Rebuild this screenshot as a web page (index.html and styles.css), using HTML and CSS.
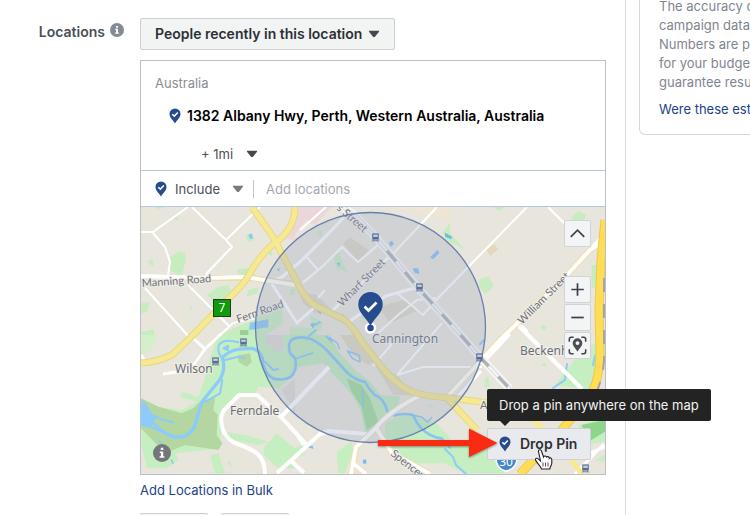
FILE: index.html
```html
<!DOCTYPE html>
<html lang="en">
<head>
<meta charset="utf-8">
<title>Locations</title>
<link rel="stylesheet" href="styles.css">
</head>
<body>
<svg class="defs" aria-hidden="true">
  <symbol id="pin" viewBox="0 0 12 16"><path d="M6 .5A5.5 5.5 0 0 0 .5 6C.5 9.400 3.500 11.500 6 15.500 8.500 11.500 11.500 9.400 11.500 6A5.500 5.500 0 0 0 6 .5Z" fill="#264b8e"/><path d="M3.300 6.200 5.300 8.100 8.800 4.500" fill="none" stroke="#fff" stroke-width="1.500"/></symbol>
  <symbol id="caret" viewBox="0 0 12 8"><path d="M.8.8H11.200L10.800 2 7 6.800Q6 7.700 5 6.800L1.200 2Z"/></symbol>
  <symbol id="info" viewBox="0 0 18 18"><circle cx="9" cy="9" r="9"/><path d="M7.800 3.800H10.300V6H7.800ZM6.800 7.400H10.200V12.200H11.400V13.800H6.600V12.200H7.900V8.900H6.800Z" fill="#fff"/></symbol>
  <symbol id="train" viewBox="0 0 20 22"><path d="M2 1H18V16H2Z" fill="#5a6d92"/><path d="M4.500 4H15.500V9.500H4.500Z" fill="#c9d0de"/><path d="M5 16 2 21M15 16 18 21M4 19H16" stroke="#5a6d92" stroke-width="2"/></symbol>
</svg>

<div class="page">
  <main class="form">
    <div class="form-label">
      <span id="loc-label">Locations</span>
      <svg class="info"><use href="#info"/></svg>
    </div>
    <div class="form-field">
      <div class="picker picker-main">
        <select aria-labelledby="loc-label"><option>People recently in this location</option></select>
        <svg class="caret"><use href="#caret"/></svg>
      </div>

      <section class="locations">
        <div class="chosen">
          <div class="country">Australia</div>
          <div class="address"><svg class="pin"><use href="#pin"/></svg><strong>1382 Albany Hwy, Perth, Western Australia, Australia</strong></div>
          <div class="picker radius">
            <select aria-label="Radius"><option>+ 1mi</option></select>
            <svg class="caret"><use href="#caret"/></svg>
          </div>
        </div>
        <div class="search">
          <svg class="pin"><use href="#pin"/></svg>
          <div class="picker include">
            <select aria-label="Include or exclude"><option>Include</option></select>
            <svg class="caret"><use href="#caret"/></svg>
          </div>
          <input type="text" placeholder="Add locations" aria-label="Add locations">
        </div>

        <div class="map">
          <svg class="map-art" viewBox="141 207 464 267" role="img" aria-label="Map of Cannington">
            <rect x="141" y="207" width="464" height="267" fill="#e8e5dc"/>
            <!-- parks and suburbs -->
            <g transform="translate(135 200) scale(.33333)" fill="#c7ecc0">
              <path d="M106 170 130 155 150 158 152 180 140 232 105 210ZM20 305 45 310 35 335 18 340ZM20 395 55 388 60 420H18ZM40 180 52 178 56 200 40 190ZM60 20H90L70 28ZM110 55 130 50 128 62ZM330 108 345 100 360 120 340 125ZM305 208 350 205 370 240 310 222ZM395 160 412 152 410 168ZM215 285 250 262 280 255 292 280 270 300 235 302ZM340 270 372 262 368 280 335 290ZM160 325 170 318 170 330ZM230 420 250 405 320 375 355 362 400 330 440 325 445 370 400 400 385 420Z"/>
              <path d="M445 95 480 70V120L450 118Z" fill="#eed8d8"/>
              <path d="M315 415V390H340V415Z" fill="#9ccf95"/>
              <path d="M340 105 350 100 355 115 345 117ZM345 368 400 358V382L342 390ZM425 208 436 204 432 215Z" fill="#8cc8f5"/>
            </g>
            <g transform="translate(290 200) scale(.33333)" fill="#c7ecc0">
              <path d="M0 30 25 20H125L75 75 50 60 10 110 0 120Z" fill="#ecd7d8"/>
              <path d="M170 20H480V60L360 30 250 18Z" fill="#eee5d2"/>
              <path d="M160 130 180 112 235 150 205 188Z M265 320 340 300 385 330 300 370ZM25 275 80 285 120 325 75 340 40 310Z" fill="#ddd7c4"/>
              <path d="M145 150 158 190 172 215 140 205 132 180ZM80 95 95 90 96 108 83 105ZM455 100 480 70V115ZM0 270 15 265V282L0 285ZM0 380 70 385 90 420H0ZM60 345 100 370 90 395 65 375ZM150 340H164L160 350ZM210 350 225 345 230 360Z"/>
              <path d="M420 172 443 150 448 158 430 178ZM368 205 385 205 388 222 374 218ZM296 128 306 122 312 132 302 140ZM140 190 150 187 148 200ZM82 333 94 330 92 345ZM60 372 75 368 70 388Z" fill="#84c2f8"/>
            </g>
            <g transform="translate(445 200) scale(.33333)" fill="#c7ecc0">
              <path d="M0 85 60 148 0 120ZM103 240 130 228 147 258 122 282 103 262ZM145 20H180L160 34ZM380 50 400 34 424 46 410 70 385 60ZM288 375 304 378 300 392 288 385ZM440 195 457 195 450 265 440 260Z"/>
              <path d="M125 150 148 133 160 148 135 168Z" fill="#e4d8b8"/>
              <path d="M0 98 22 110 18 118 0 110Z" fill="#70bde0"/>
            </g>
            <g transform="translate(135 335) scale(.33333)">
              <path d="M18 0H65L60 30 18 70Z" fill="#d5efcb"/>
              <path d="M250 0H480V120L430 160 370 155 360 180 310 175 262 235 255 340 120 355 130 375 95 400 35 400 20 330V190L70 215 140 225 185 200 135 185 140 170 190 185 210 130 225 70ZM265 290 330 300 400 320 370 330 265 310ZM385 340 425 295 480 340V400L430 400 385 360ZM225 360 250 355 270 415H240ZM275 380 285 378 295 400Z" fill="#c5efc0"/>
              <path d="M18 190 70 215 140 235 175 220 200 195 240 190 235 225 248 240 245 300 262 325 250 345 150 330 90 355 18 280ZM310 60 345 55 350 80 335 95 310 80Z" fill="#b4d6a0"/>
              <path d="M395 0H445V45L430 55 390 20ZM440 165 480 130V230Z" fill="#dedad4"/>
            </g>
            <g transform="translate(290 335) scale(.33333)">
              <path d="M0 0H120L145 50 200 110 240 140 270 180 330 185 325 205 300 245 245 290 225 290 210 220 180 170 140 130 100 85 30 95 0 130Z" fill="#c0eabc"/>
              <path d="M170 130 215 150 240 190 265 260 230 285 215 215 185 170Z" fill="#9edb9a"/>
              <path d="M285 265 320 245 360 235 440 265 480 310V385L350 385 300 345 285 300ZM140 350 185 320 190 345 165 415H145ZM0 348 35 330 45 358 0 378ZM415 210 425 205 422 220Z" fill="#c5efc0"/>
              <path d="M150 0H195L255 80 235 90 190 60ZM255 90 320 120 370 180 310 180Z" fill="#ddd8c3"/>
              <path d="M218 375 228 373 230 385 220 387ZM50 335 68 332 70 342Z" fill="#78bdf1"/>
            </g>
            <g transform="translate(445 335) scale(.33333)">
              <path d="M330 150 400 60 480 0V90L440 165 400 160ZM0 318 100 325 135 355 180 415H60L0 385ZM400 270 480 250V320L410 330ZM450 375 480 360V380ZM285 90 300 82 305 96ZM120 130 130 125 135 155H118Z" fill="#c5efc0"/>
              <path d="M410 270 480 255V290L430 320Z" fill="#8dd58a"/>
            </g>
            <!-- rivers -->
            <g fill="none" stroke="#8ccbfa" stroke-linecap="round" stroke-linejoin="round">
              <g transform="translate(135 335) scale(.33333)">
                <path d="M25 200 50 240 85 255 115 262" stroke-width="6"/>
                <path d="M20 220Q40 250 60 270Q90 300 120 305T165 292C190 270 180 240 205 195L250 140Q275 105 262 68Q280 50 300 45T350 40Q375 45 382 70" stroke-width="10"/>
                <path d="M20 265 80 290 120 310M145 305 180 280 190 240M212 200 255 175 262 135M262 70Q245 50 252 30 265 10 310 22M270 75 310 65 330 68M390 80 415 105 430 102" stroke-width="6"/>
                <path d="M265 40 280 32 278 46ZM20 205 60 250 45 275 20 270ZM72 318 78 325M110 375 114 385" stroke-width="5" fill="#8ccbfa"/>
              </g>
              <g transform="translate(250 207) scale(.33333)" stroke="#84c5fa">
                <path d="M37 455Q40 500 70 515 100 522 122 510 142 490 136 455L120 438Q112 410 125 398 150 385 185 397 215 412 235 435L290 495Q315 520 345 525 355 545 375 565 405 575 415 625M432 625Q470 617 490 625 500 650 515 665 540 690 575 695" stroke-width="8"/>
                <path d="M138 455 188 438M338 550 340 600M492 625 515 630 532 645 545 632M228 388 245 405 238 392 262 408 268 425M292 432 328 445 330 465 308 455Z" stroke-width="4"/>
              </g>
              <path d="M442 438 450 448M445 449 453 457 456 465 466 474M553 388 565 380 567 364M593 365 595 356M480 344 484 340M309 336 316 330M315 325 320 322" stroke-width="2"/>
            </g>
            <!-- street casings and streets -->
            <g fill="none" stroke="#fff" stroke-linejoin="round">
              <path d="M188 207 153 232H141M153 233 165 247 170 262 168 275M192 207 226 240 232 247 207 273 205 281M226 240 260 207M145 288 191 339M188 285 229 326M215 340 233 323 255 318M305 255 318 270M318 270 303 282M318 298 325 290M326 207 300 230" stroke-width="2"/>
              <path d="M272 281 282 277 301 261 330 232 347 214M272 284 297 323 316 306M250 368" stroke-width="3"/>
              <path d="M207 278 250 278 294 284" stroke="#ecdca2" stroke-width="6"/>
              <path d="M141 276 205 278 245 277 295 285" stroke-width="4"/>
              <path d="M194 339 205 349 221 334M205 349 190 370 163 374M141 355 146 362" stroke-width="3"/>
              <path d="M265 474C265 455 255 450 235 443 219 435 219 415 225 409L239 395H257L281 417 296 433 304 445M281 417 329 367M277 473 296 456 320 434 329 431 367 434M290 427 306 444M290 460 304 473" stroke-width="4"/>
              <path d="M351 474 356 447 376 428Q388 412 419 396M376 428 392 453 430 474M354 464 366 474" stroke="#f1dfb5" stroke-width="6"/>
              <path d="M351 474 356 447 376 428Q388 412 419 396M376 428 392 453 430 474M354 464 366 474" stroke-width="4"/>
              <path d="M303 283 323 266 342 247 358 262 378 245M397 293 423 315 440 296 527 207M397 375 423 367H482M397 375 442 323M450 398 485 358M373 366 391 345 387 338M376 335 398 315 417 300 436 298M391 256 437 207M548 207 566 225" stroke-width="2"/>
              <path d="M333 310 390 256M350 321 386 296 418 287" stroke-width="3"/>
              <path d="M605 240 590 250 565 277 500 340 448 396" stroke="#f0dda8" stroke-width="6"/>
              <path d="M605 240 590 250 565 277 500 340 448 396M519 326 582 389M521 326 527 332M590 250 604 235" stroke-width="4"/>
              <path d="M604 444 575 474M485 361 510 334M451 404 481 371M590 453 605 447" stroke-width="3"/>
            </g>
            <!-- railway -->
            <g fill="none">
              <path d="M343 207 357 217 378 240 420 290 450 323 480 357 510 389" stroke="#f6f6f6" stroke-width="8"/>
              <path d="M343 207 357 217 378 240 420 290 450 323 480 357 510 389" stroke="#c4c6cb" stroke-width="4"/>
              <path d="M343 207 357 217 378 240 420 290 450 323 480 357 510 389" stroke="#f3f3f3" stroke-width="3"/>
              <path d="M378 240 420 290 450 323 480 357 510 389" stroke="#aeb0b3" stroke-width="3" stroke-dasharray="14 14" stroke-dashoffset="-14"/>
            </g>
            <!-- main roads -->
            <g fill="none" stroke-linejoin="round">
              <g stroke="#e7d789" stroke-width="7">
                <path d="M295 207C295 226 284 237 271 246 252 263 251 276 239 288L190 338 172 355Q158 362 141 363"/>
                <path d="M252 207 273 237 296 280Q304 299 316 306L345 320Q354 328 362 342L380 365Q395 384 412 392 430 397 450 398L488 403M447 398 477 430"/>
              </g>
              <g stroke="#f7e98f" stroke-width="5">
                <path d="M295 207C295 226 284 237 271 246 252 263 251 276 239 288L190 338 172 355Q158 362 141 363"/>
                <path d="M252 207 273 237 296 280Q304 299 316 306L345 320Q354 328 362 342L380 365Q395 384 412 392 430 397 450 398L488 403M447 398 477 430M568 456 582 474M528 416 542 428"/>
              </g>
              <path d="M605 220 601 260 599 310 600 350Q600 380 590 396L560 432 520 474" stroke="#eac94d" stroke-width="9"/>
              <path d="M605 220 601 260 599 310 600 350Q600 380 590 396L560 432 520 474" stroke="#ffdd55" stroke-width="7"/>
              <path d="M604 278V340Q606 370 597 391" stroke="#a5a5a5" stroke-width="2" stroke-dasharray="14 12"/>
            </g>
            <g class="streets">
              <text x="142" y="287" transform="rotate(-4 142 287)">Manning Road</text>
              <text x="238" y="323" transform="rotate(-19 238 323)">Fern Road</text>
              <text x="342" y="307" transform="rotate(-45 342 307)">Wharf Street</text>
              <text x="336" y="209" transform="rotate(41 336 209)">s Street</text>
              <text x="522" y="325" transform="rotate(-45 522 325)">William Street</text>
              <text x="390" y="455" transform="rotate(38 390 455)">Spencer</text>
              <text x="480" y="409">A</text>
            </g>
            <g class="suburbs">
              <text x="175" y="373">Wilson</text>
              <text x="230" y="415">Ferndale</text>
              <text x="372" y="343">Cannington</text>
              <text x="520" y="355">Beckenham</text>
            </g>
            <!-- search radius -->
            <circle cx="370.500" cy="327.500" r="115" fill="#98a6c5" fill-opacity=".3" stroke="#6882ad" stroke-width="1.300"/>
            <g>
              <use href="#train" x="371" y="233" width="9" height="9"/><use href="#train" x="415" y="283" width="9" height="9"/>
              <use href="#train" x="475" y="353" width="9" height="9"/><use href="#train" x="239" y="338" width="9" height="9"/>
              <use href="#train" x="211" y="357" width="9" height="9"/><use href="#train" x="581" y="464" width="9" height="9"/>
            </g>
            <rect x="213.500" y="299.500" width="17" height="17" fill="#109b0c" stroke="#233b22"/>
            <text class="route" x="222" y="312">7</text>
            <path d="M496 455H517Q518 469 506 471 495 469 496 455Z" fill="#4488cc" stroke="#fff" stroke-width="1.500"/>
            <text class="route" x="506" y="466">30</text>
            <!-- dropped pin -->
            <circle cx="370.500" cy="328" r="4.500" fill="#264b8e" stroke="#fff" stroke-width="2.500"/>
            <path d="M370.500 292A12.200 12.200 0 0 0 358.300 304.500C358.300 313 366 317 370.500 326 375 317 382.700 313 382.700 304.500A12.200 12.200 0 0 0 370.500 292Z" fill="#264b8e"/>
            <path d="M364.500 306.500 368.500 310.500 376.500 302.500" fill="none" stroke="#fff" stroke-width="2.700"/>
            <svg x="153" y="444" width="18" height="18" fill="#747778"><use href="#info"/></svg>
          </svg>

          <div class="controls">
            <button type="button" class="collapse" aria-label="Collapse map"><svg viewBox="0 0 26 26"><path d="M6 16.500 13 9.500 20 16.500"/></svg></button>
            <button type="button" aria-label="Zoom in"><svg viewBox="0 0 26 26"><path d="M6.500 13H19.500M13 6.500V19.500"/></svg></button>
            <button type="button" aria-label="Zoom out"><svg viewBox="0 0 26 26"><path d="M6.500 13H19.500"/></svg></button>
            <button type="button" aria-label="Find location"><svg viewBox="0 0 26 26"><path d="M4.500 9V6.500Q4.500 4.500 6.500 4.500H9M17 4.500H19.500Q21.500 4.500 21.500 6.500V9M21.500 17V19.500Q21.500 21.500 19.500 21.500H17M9 21.500H6.500Q4.500 21.500 4.500 19.500V17" stroke-width="1.600"/><path fill-rule="evenodd" d="M13 5.500A5 5 0 0 0 8 10.500C8 14 11 16 13 19.500 15 16 18 14 18 10.500A5 5 0 0 0 13 5.500ZM13 8.500A2 2 0 1 1 13 12.500 2 2 0 0 1 13 8.500Z" fill="#4b4f52" stroke="none"/></svg></button>
          </div>

          <div class="drop">
            <div class="tooltip" role="tooltip" id="drop-tip">Drop a pin anywhere on the map</div>
            <button type="button" class="drop-button" aria-describedby="drop-tip"><svg class="pin"><use href="#pin"/></svg>Drop Pin</button>
          </div>

          <svg class="pointer" viewBox="141 207 464 267" aria-hidden="true">
            <g class="shadow"><path d="M378 440H469V428.500L497.500 443 469 457V446H378Z" fill="#f92b12"/></g>
            <path d="M538.500 451.500C538 449.500 541 449 541.500 451L543.500 457C544 455.500 546.500 455.500 546.500 457.500 547 456 549.300 456.300 549.300 458.300 550 457.300 551.800 458 551.800 460V463C551.800 465.500 550 466.500 549.800 469H541.500C541 466 537 463.500 535.500 460 535 458 537.500 457.500 539 459.500L540.500 461Z" fill="#fff" stroke="#222" stroke-width="1.100"/>
            <path d="M543 462.500V466.500M545.500 462.500V466.500M548 462.500V466.500" stroke="#222" stroke-width=".8"/>
          </svg>
        </div>
      </section>

      <a class="bulk" href="#">Add Locations in Bulk</a>
      <div class="more"><button type="button" aria-label="Save"></button><button type="button" aria-label="Cancel"></button></div>
    </div>
  </main>

  <aside class="side">
    <div class="card">
      <p>The accuracy of estimates<br>campaign data<br>Numbers are provided<br>for your budget<br>guarantee results</p>
      <a href="#">Were these estimates helpful?</a>
    </div>
  </aside>
</div>
</body>
</html>
```

FILE: styles.css
```css
* { box-sizing: border-box; }
html { height: 100%; overflow: hidden; }
body {
  margin: 0;
  background: #fff;
  color: #4b4f56;
  font: 13px/20px Inter, "Liberation Sans", sans-serif;
}
button, select, input { font: inherit; color: inherit; }
a { color: #1d4286; text-decoration: none; }
.defs { display: none; }

.page { display: grid; grid-template-columns: minmax(0, 1fr) 124px; height: 100vh; overflow: hidden; }
.form {
  display: grid;
  grid-template-columns: 124px minmax(0, 1fr);
  gap: 16px;
  padding: 18px 19px 0 0;
  border-right: 1px solid #dcdde0;
}
.form-label {
  display: flex;
  justify-content: flex-end;
  align-items: flex-start;
  gap: 5px;
  padding-top: 5px;
  font-size: 14px;
  font-weight: 600;
}
.info { width: 14px; height: 14px; fill: #858b95; }
.form-label span { line-height: 18px; }

.picker { display: inline-grid; align-items: center; }
.picker > * { grid-area: 1 / 1; }
.picker select {
  appearance: none;
  margin: 0;
  padding: 0 24px 0 0;
  border: 0;
  background: none;
}
.caret { justify-self: end; width: 12px; height: 8px; fill: #444950; pointer-events: none; }
.picker-main { display: grid; width: 255px; margin-bottom: 10px; }
.picker-main select {
  height: 32px;
  padding: 0 14px;
  border: 1px solid #ccd0d5;
  border-radius: 2px;
  background: #f2f3f3;
  color: #2c3036;
  font-size: 14px;
  font-weight: 600;
}
.picker-main .caret { margin-right: 15px; }

.locations { border: 1px solid #bcc0c6; }
.chosen { padding: 12px 14px 6px; }
.country { color: #8a8d91; }
.address { display: flex; align-items: center; gap: 6px; padding: 13px 0 18px 14px; color: #000; font-size: 14px; white-space: nowrap; }
.address strong { font-weight: 600; }
.pin { flex: none; width: 12px; height: 16px; }
.radius { margin-left: 46px; }
.search {
  display: flex;
  align-items: center;
  height: 37px;
  padding: 0 14px;
  border: solid #b4c7df;
  border-width: 1px 0;
}
.include { margin-left: 8px; }
.include .caret { fill: #777b82; }
.search input {
  flex: 1;
  min-width: 0;
  height: 18px;
  margin-left: 9px;
  padding: 0 0 0 12px;
  border: 0;
  border-left: 1px solid #bfc5ce;
  background: none;
}
.search input::placeholder { color: #a5a8ad; opacity: 1; }

.map { position: relative; }
.map-art { display: block; width: 100%; height: auto; }
.map-art text { font-family: "Noto Sans", sans-serif; font-size: 12px; paint-order: stroke; stroke: #f0eee8; stroke-width: 2px; fill: #696d74; }
.map-art .streets text { font-family: Lato, sans-serif; font-size: 11px; fill: #6f7278; }
.map-art .route { fill: #fff; stroke: none; text-anchor: middle; }

.controls { position: absolute; top: 13px; right: 14px; display: grid; gap: 1px; }
.controls button {
  width: 27px;
  height: 27px;
  padding: 0;
  border: 1px solid #d0d3d8;
  border-radius: 2px;
  background: #f3f4f6;
}
.controls .collapse { margin-bottom: 28px; }
.controls svg { display: block; width: 25px; height: 25px; fill: none; stroke: #3f4347; stroke-width: 1.8; }

.drop { position: absolute; right: 14px; bottom: 14px; }
.drop-button {
  display: flex;
  align-items: center;
  gap: 9px;
  width: 104px;
  height: 32px;
  padding: 0 11px;
  border: 1px solid #ced1d8;
  border-radius: 2px;
  background: #e9eaed;
  color: #2d3035;
  font-size: 14px;
  font-weight: 600;
  white-space: nowrap;
}
.tooltip {
  position: absolute;
  left: 0;
  bottom: calc(100% + 7px);
  padding: 6px 12px;
  border-radius: 2px;
  background: #232323;
  color: #f3f3f3;
  white-space: nowrap;
}
.tooltip::after {
  content: "";
  position: absolute;
  top: 100%;
  left: 13px;
  border: 5px solid transparent;
  border-top-color: #232323;
  border-bottom: 0;
}
.pointer { position: absolute; inset: 0; width: 100%; height: 100%; pointer-events: none; }
.shadow { filter: drop-shadow(0 1px 1px #0006); }

.bulk { display: block; padding: 5px 0 13px; }
.more { display: flex; gap: 13px; }
.more button { width: 68px; height: 32px; border: 1px solid #ccd0d5; border-radius: 2px; background: #f2f3f3; }

.side { overflow: hidden; padding-left: 13px; }
.card {
  width: 260px;
  height: 138px;
  padding: 0 19px;
  border: solid #d5d7da;
  border-width: 0 1px 1px;
  border-radius: 0 0 6px 6px;
  color: #7f858f;
  line-height: 19px;
  white-space: nowrap;
}
.card p { margin: -3px 0 8px; }
```
